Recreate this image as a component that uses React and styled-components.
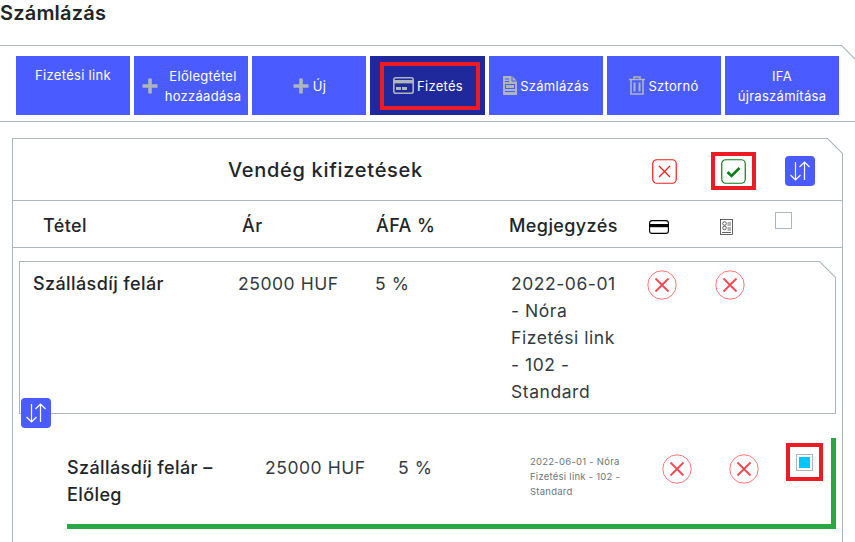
import styled, { createGlobalStyle } from 'styled-components';

const GlobalStyle = createGlobalStyle`
  html, body {
    margin: 0;
    padding: 0;
    background: #fff;
  }
  body {
    width: 855px;
    height: 542px;
    overflow: hidden;
    font-family: Inter, "Liberation Sans", sans-serif;
    color: #212529;
  }
`;

const BORDER = '#adb5bd';
const BLUE = '#4a5cff';
const RED_MARK = '#ed1c24';

const Title = styled.h1`
  margin: 0;
  height: 45px;
  padding-top: 1px;
  box-sizing: border-box;
  font-size: 20px;
  line-height: 24px;
  font-weight: 600;
  letter-spacing: 0.2px;
`;

const cut = (size) => `
  position: absolute;
  top: -1px;
  right: -1px;
  width: ${size}px;
  height: ${size}px;
  background: linear-gradient(to top right, transparent calc(50% - 1px), ${BORDER} 50%, #fff calc(50% + 1px));
`;

const Toolbar = styled.div`
  position: relative;
  display: grid;
  grid-template-columns: repeat(3, 114px) 115px repeat(3, 114px);
  gap: 4px;
  height: 77px;
  padding: 10px 0 0 16px;
  box-sizing: border-box;
  border-top: 1px solid ${BORDER};
  border-bottom: 1px solid ${BORDER};
  &::after {
    content: '';
    ${cut(15)}
  }
`;

const ActionButton = styled.div`
  display: flex;
  align-items: ${(p) => (p.$top ? 'flex-start' : 'center')};
  justify-content: center;
  gap: ${(p) => p.$gap ?? 3}px;
  height: 59px;
  padding-top: ${(p) => (p.$top ? 9 : 0)}px;
  box-sizing: border-box;
  background: ${(p) => (p.$active ? '#20299c' : BLUE)};
  color: #fff;
  font-size: 13px;
  line-height: 20px;
  letter-spacing: 0.3px;
  text-align: center;
`;

const ActiveMark = styled.div`
  display: flex;
  align-items: center;
  justify-content: center;
  gap: 3px;
  width: 100px;
  height: 48px;
  margin-left: 5px;
  padding-right: 4px;
  box-sizing: border-box;
  border: 4px solid ${RED_MARK};
`;

const Card = styled.section`
  position: relative;
  width: 831px;
  height: 420px;
  margin: 16px 0 0 12px;
  box-sizing: border-box;
  border: 1px solid ${BORDER};
  border-bottom: none;
  &::after {
    content: '';
    ${cut(16)}
  }
`;

const CardHeader = styled.header`
  display: grid;
  grid-template-columns: 424px 59px 74px 30px;
  align-items: center;
  height: 62px;
  padding: 3px 0 0 215px;
  box-sizing: border-box;
  border-bottom: 1px solid ${BORDER};
`;

const CardTitle = styled.h2`
  margin: -2px 0 0;
  font-size: 20px;
  font-weight: 500;
  letter-spacing: 0.7px;
`;

const Marked = styled.div`
  display: flex;
  align-items: center;
  justify-content: center;
  width: 45px;
  height: 38px;
  box-sizing: border-box;
  border: 4px solid ${RED_MARK};
`;

const SortButton = styled.div`
  display: flex;
  align-items: center;
  justify-content: center;
  width: 30px;
  height: 30px;
  border-radius: 4px;
  background: ${BLUE};
`;

const ColumnHead = styled.div`
  display: grid;
  grid-template-columns: 199px 134px 133px 140px 71px 55px 18px;
  align-items: center;
  height: 47px;
  padding: 3px 0 0 30px;
  box-sizing: border-box;
  border-bottom: 1px solid ${BORDER};
  font-size: 18px;
  font-weight: 500;
  letter-spacing: 0.4px;
  svg {
    margin-top: 3px;
  }
`;

const Box = styled.span`
  display: flex;
  align-items: center;
  justify-content: center;
  width: 17px;
  height: 17px;
  box-sizing: border-box;
  border: 1px solid ${BORDER};
  margin-top: ${(p) => p.$lift ?? 0}px;
`;

const BoxFill = styled.span`
  width: 11px;
  height: 11px;
  background: #00c8ff;
`;

const ItemCard = styled.div`
  position: relative;
  display: grid;
  grid-template-columns: 205px 137px 136px 136px 68px 30px;
  width: 817px;
  height: 153px;
  margin: 13px 0 0 6px;
  padding: 8px 0 0 13px;
  box-sizing: border-box;
  border: 1px solid ${BORDER};
  font-size: 17.5px;
  line-height: 27px;
  &::after {
    content: '';
    ${cut(17)}
  }
`;

const ItemName = styled.div`
  max-width: 165px;
  font-size: 18px;
  font-weight: 500;
  letter-spacing: 0.4px;
`;

const Cell = styled.div`
  color: #343a40;
  letter-spacing: 0.55px;
`;

const Note = styled.div`
  width: 112px;
  color: #343a40;
  letter-spacing: 0.55px;
`;

const IconCell = styled.div`
  display: flex;
  align-items: flex-start;
`;

const FloatingSort = styled(SortButton)`
  position: absolute;
  left: 1px;
  bottom: -15px;
`;

const SubItem = styled.div`
  display: grid;
  grid-template-columns: 198px 133px 132px 132px 67px 57px 37px;
  width: 769px;
  height: 91px;
  margin: 24px 0 0 54px;
  padding-top: 16px;
  box-sizing: border-box;
  border-right: 5px solid #28a745;
  border-bottom: 5px solid #28a745;
  font-size: 17.5px;
  line-height: 27px;
`;

const SmallNote = styled.div`
  width: 100px;
  font-size: 9.5px;
  line-height: 15px;
  color: #6c757d;
  letter-spacing: 0.25px;
`;

const BoxMark = styled.div`
  display: flex;
  align-items: center;
  justify-content: center;
  width: 37px;
  height: 38px;
  margin-top: -11px;
  box-sizing: border-box;
  border: 4px solid ${RED_MARK};
`;

const PlusIcon = ({ size = 18 }) => (
  <svg width={size} height={size} viewBox="0 0 18 18" fill="none" style={{ flex: 'none' }}>
    <path d="M9 1.5v15M1.5 9h15" stroke={BORDER} strokeWidth="3.6" />
  </svg>
);

const CardIcon = () => (
  <svg width="21" height="17" viewBox="0 0 21 17" style={{ flex: 'none' }}>
    <rect x="0.8" y="0.8" width="19.4" height="15.4" rx="2" fill="none" stroke={BORDER} strokeWidth="1.6" />
    <rect x="1" y="3" width="19" height="3.4" fill={BORDER} />
    <rect x="3" y="10" width="5" height="3" fill={BORDER} />
    <rect x="9" y="10" width="5" height="3" fill={BORDER} />
  </svg>
);

const FileIcon = () => (
  <svg width="14" height="19" viewBox="0 0 14 19" style={{ flex: 'none' }}>
    <path d="M0 0h9l5 5v14H0z" fill={BORDER} />
    <path d="M9 0v5h5" fill="none" stroke={BLUE} strokeWidth="1" />
    <path d="M2 3h4M2 5.5h4M2 15.5h10" stroke={BLUE} strokeWidth="1" />
    <rect x="2.5" y="8.5" width="9" height="4" fill="none" stroke={BLUE} strokeWidth="1" />
  </svg>
);

const TrashIcon = () => (
  <svg width="16" height="19" viewBox="0 0 16 19" fill="none" style={{ flex: 'none' }}>
    <path d="M0 3.5h16M5 3V1h6v2" stroke={BORDER} strokeWidth="1.5" />
    <path d="M2 4v14h12V4" stroke={BORDER} strokeWidth="1.6" />
    <path d="M5.5 6.5v9M10.5 6.5v9" stroke={BORDER} strokeWidth="2" />
  </svg>
);

const SortIcon = () => (
  <svg width="24" height="24" viewBox="0 0 24 24" fill="none" stroke="#fff" strokeWidth="1.2">
    <path d="M7.5 3v18M2.5 16l5 5 5-5M16.5 21V3M11.5 8l5-5 5 5" />
  </svg>
);

const SquareX = () => (
  <svg width="25" height="25" viewBox="0 0 25 25" fill="none">
    <rect x="0.75" y="0.75" width="23.5" height="23.5" rx="4" stroke="#f01f1f" strokeWidth="1.2" />
    <path d="M7 7l11 11M18 7L7 18" stroke="#f01f1f" strokeWidth="1.3" />
  </svg>
);

const SquareCheck = () => (
  <svg width="25" height="25" viewBox="0 0 25 25" fill="none">
    <rect x="0.75" y="0.75" width="23.5" height="23.5" rx="4" stroke="#0a7d1a" strokeWidth="1.2" />
    <path d="M6.5 13l4 4 8-8" stroke="#0a7d1a" strokeWidth="2.6" />
  </svg>
);

const CircleX = () => (
  <svg width="30" height="30" viewBox="0 0 30 30" fill="none">
    <circle cx="15" cy="15" r="14.2" stroke="#f77" strokeWidth="1" />
    <path d="M8.5 8.5l13 13M21.5 8.5l-13 13" stroke="#f5474f" strokeWidth="1.8" />
  </svg>
);

const BankCardIcon = () => (
  <svg width="20" height="14" viewBox="0 0 20 14" fill="none">
    <rect x="0.6" y="0.6" width="18.8" height="12.8" rx="2.5" stroke="#000" strokeWidth="1.1" />
    <rect x="0.6" y="4" width="18.8" height="3.2" fill="#000" />
  </svg>
);

const ReceiptIcon = () => (
  <svg width="13" height="16" viewBox="0 0 13 16" fill="none" stroke="#222" strokeWidth="0.7">
    <rect x="0.5" y="0.5" width="12" height="15" />
    <circle cx="4.5" cy="4.5" r="1.8" />
    <circle cx="4.5" cy="9" r="1.8" />
    <path d="M7.5 4h3.5M7.5 6h3.5M7.5 9h3.5M7.5 11h3.5M2 13.5h9" />
  </svg>
);

export default function App() {
  return (
    <>
      <GlobalStyle />
      <Title>Számlázás</Title>
      <Toolbar>
        <ActionButton $top>Fizetési link</ActionButton>
        <ActionButton $gap={6}>
          <PlusIcon />
          <span>Előlegtétel<br />hozzáadása</span>
        </ActionButton>
        <ActionButton>
          <PlusIcon />
          <span>Új</span>
        </ActionButton>
        <ActionButton $active>
          <ActiveMark>
            <CardIcon />
            <span>Fizetés</span>
          </ActiveMark>
        </ActionButton>
        <ActionButton>
          <FileIcon />
          <span>Számlázás</span>
        </ActionButton>
        <ActionButton>
          <TrashIcon />
          <span>Sztornó</span>
        </ActionButton>
        <ActionButton>
          <span>IFA<br />újraszámítása</span>
        </ActionButton>
      </Toolbar>
      <Card>
        <CardHeader>
          <CardTitle>Vendég kifizetések</CardTitle>
          <SquareX />
          <Marked><SquareCheck /></Marked>
          <SortButton><SortIcon /></SortButton>
        </CardHeader>
        <ColumnHead>
          <span>Tétel</span>
          <span>Ár</span>
          <span>ÁFA %</span>
          <span>Megjegyzés</span>
          <BankCardIcon />
          <ReceiptIcon />
          <Box $lift={-11} />
        </ColumnHead>
        <ItemCard>
          <ItemName>Szállásdíj felár</ItemName>
          <Cell>25000 HUF</Cell>
          <Cell>5 %</Cell>
          <Note>2022-06-01 - Nóra Fizetési link - 102 - Standard</Note>
          <IconCell><CircleX /></IconCell>
          <IconCell><CircleX /></IconCell>
          <FloatingSort><SortIcon /></FloatingSort>
        </ItemCard>
        <SubItem>
          <ItemName>Szállásdíj felár – Előleg</ItemName>
          <Cell>25000 HUF</Cell>
          <Cell>5 %</Cell>
          <SmallNote>2022-06-01 - Nóra Fizetési link - 102 - Standard</SmallNote>
          <IconCell><CircleX /></IconCell>
          <IconCell><CircleX /></IconCell>
          <BoxMark><Box><BoxFill /></Box></BoxMark>
        </SubItem>
      </Card>
    </>
  );
}
